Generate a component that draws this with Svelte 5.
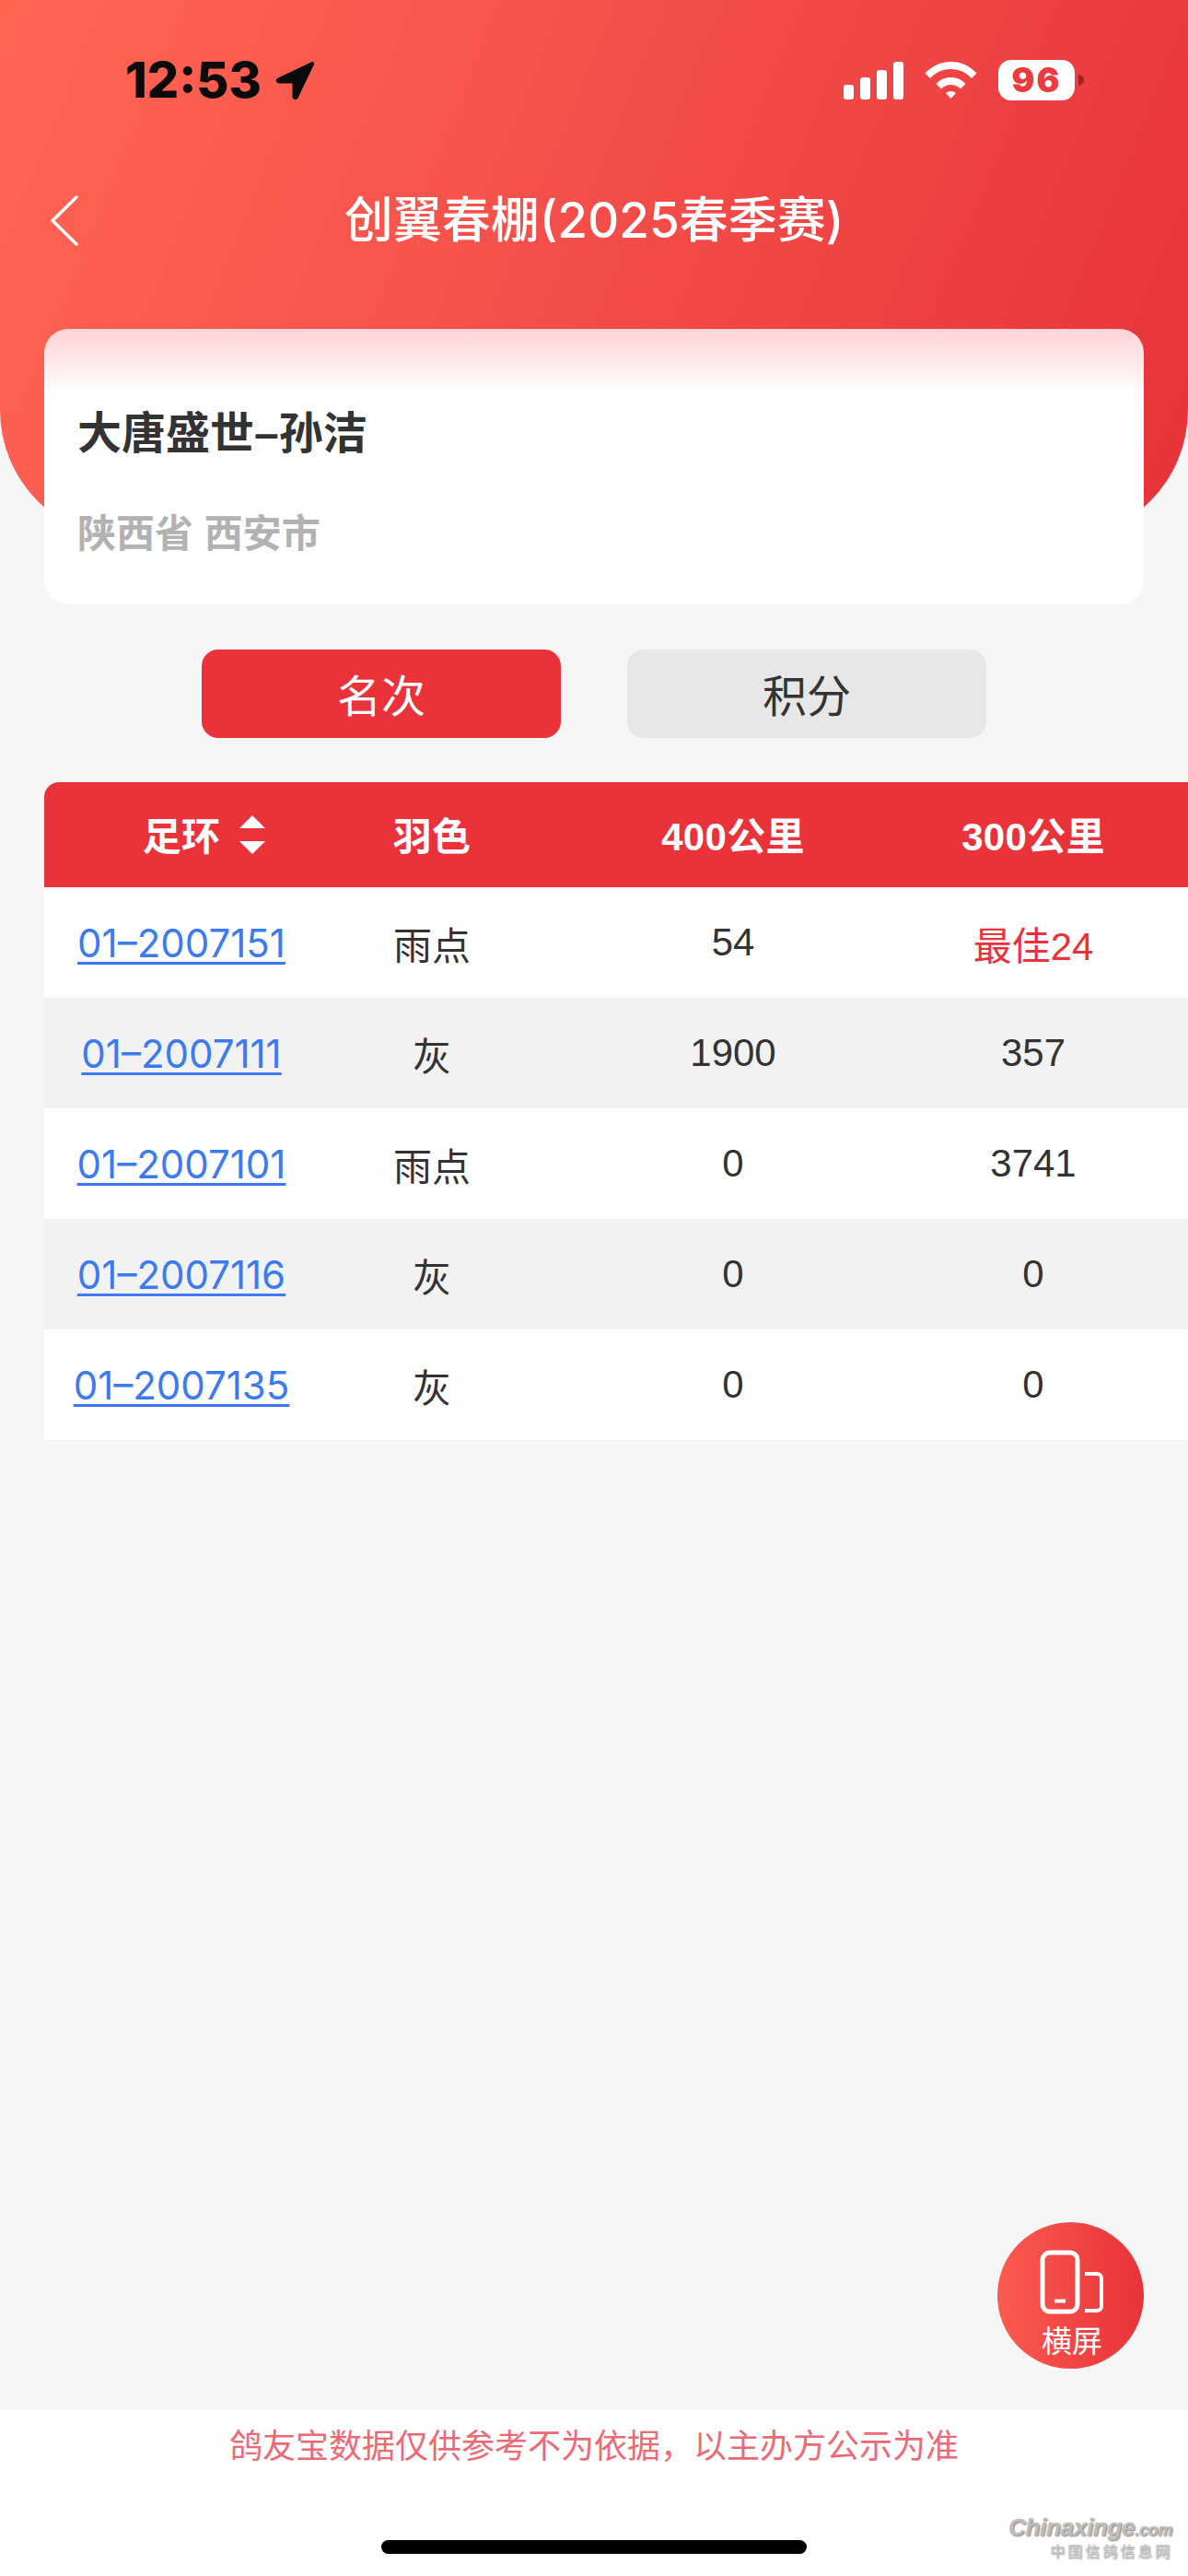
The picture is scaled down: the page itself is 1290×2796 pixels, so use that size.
<script>
	const rows = [
		{ ring: '01–2007151', color: '雨点', a: '54', b: '最佳24', best: true },
		{ ring: '01–2007111', color: '灰', a: '1900', b: '357' },
		{ ring: '01–2007101', color: '雨点', a: '0', b: '3741' },
		{ ring: '01–2007116', color: '灰', a: '0', b: '0' },
		{ ring: '01–2007135', color: '灰', a: '0', b: '0' }
	];
</script>

<div class="page">
	<header class="top">
		<div class="status">
			<div class="time">
				<span>12:53</span>
				<svg width="46" height="46" viewBox="0 0 46 46">
					<path d="M41 3.500 5 20.500c-3.400 1.600-2.400 6 1.300 6H20.500V40.700c0 3.800 4.500 4.700 6.200 1.300L43.800 6.300C45 3.900 43.300 2.400 41 3.500z" fill="#0a0a0a" />
				</svg>
			</div>
			<div class="sys">
				<div class="bars">
					<i style="height:16px"></i>
					<i style="height:24px"></i>
					<i style="height:32px"></i>
					<i style="height:41px"></i>
				</div>
				<svg class="wifi" width="59" height="42" viewBox="0 0 58 42">
					<path d="M1 13.500C8.500 5.500 18 1 29 1s20.500 4.500 28 12.500l-5.500 5.500C45.500 12.500 38 9 29 9S12.500 12.500 6.500 19z" fill="#fff" />
					<path d="M13 25C17 20.500 22.800 18 29 18s12 2.500 16 7l-5.500 5.500C36.700 27.500 33 26 29 26s-7.700 1.500-10.500 4.500z" fill="#fff" />
					<path d="M23.500 35c1.500-1.300 3.500-2 5.500-2s4 .7 5.500 2L29 41z" fill="#fff" />
				</svg>
				<div class="battery"><b>96</b><i></i></div>
			</div>
		</div>
		<div class="nav">
			<svg class="back" width="34" height="55" viewBox="0 0 34 55">
				<path d="M30 2 4 27.500 30 53" fill="none" stroke="#fff" stroke-width="3.500" stroke-linecap="round" stroke-linejoin="round" />
			</svg>
			<h1>创翼春棚(2025春季赛)</h1>
		</div>
	</header>

	<section class="card">
		<div class="name">大唐盛世–孙洁</div>
		<div class="place">陕西省 西安市</div>
	</section>

	<div class="tabs">
		<button class="tab on">名次</button>
		<button class="tab">积分</button>
	</div>

	<div class="table">
		<div class="row head">
			<div class="sort">
				足环
				<svg width="30" height="42" viewBox="0 0 30 42">
					<path d="M15 0 29 14H1zM1 28h28L15 42z" fill="#fff" />
				</svg>
			</div>
			<div>羽色</div>
			<div>400公里</div>
			<div>300公里</div>
		</div>
		{#each rows as r}
			<div class="row">
				<div><a href="#top">{r.ring}</a></div>
				<div>{r.color}</div>
				<div>{r.a}</div>
				<div class:best={r.best}>{r.b}</div>
			</div>
		{/each}
	</div>

	<div class="spacer">
		<div class="fab">
			<svg width="72" height="70" viewBox="0 0 72 70">
				<rect x="3" y="3" width="38" height="64" rx="8" fill="none" stroke="#fff" stroke-width="5" />
				<path d="M16 55.500h12" stroke="#fff" stroke-width="4" />
				<path d="M49 26h13c3 0 5 2 5 5v30c0 3-2 5-5 5H49" fill="none" stroke="#fff" stroke-width="4" />
			</svg>
			<span>横屏</span>
		</div>
	</div>

	<footer class="foot">
		<p>鸽友宝数据仅供参考不为依据，以主办方公示为准</p>
		<div class="home"></div>
		<div class="mark">
			<div class="en">Chinaxinge<small>.com</small></div>
			<div class="cn">中国信鸽信息网</div>
		</div>
	</footer>
</div>

<style>
	:global(body) {
		margin: 0;
		background: #f6f6f6;
	}
	.page {
		width: 1290px;
		height: 2796px;
		display: flex;
		flex-direction: column;
		overflow: hidden;
		font-family: "Liberation Sans", "Noto Sans CJK SC", sans-serif;
		color: #333;
	}
	.top {
		height: 585px;
		box-sizing: border-box;
		padding-top: 64px;
		border-radius: 0 0 140px 140px;
		background: linear-gradient(112deg, #ff6652 0%, #f4504b 45%, #e8323a 100%);
	}
	.status {
		height: 46px;
		display: flex;
		justify-content: space-between;
		align-items: center;
		padding: 0 123px 0 136px;
	}
	.time {
		display: flex;
		align-items: center;
		gap: 13px;
		font: 800 54px/46px Inter, sans-serif;
		color: #0a0a0a;
	}
	.sys {
		display: flex;
		align-items: center;
		gap: 22px;
	}
	.bars {
		display: flex;
		align-items: flex-end;
		gap: 7px;
		height: 41px;
	}
	.bars i {
		width: 11px;
		background: #fff;
		border-radius: 3px;
	}
	.battery {
		position: relative;
		width: 83px;
		height: 44px;
		background: #fff;
		border-radius: 14px;
		display: flex;
		align-items: center;
		justify-content: center;
	}
	.battery b {
		font: 900 37px/44px Inter, sans-serif;
		letter-spacing: 2px;
		color: #ea3c40;
	}
	.battery i {
		position: absolute;
		left: 87px;
		top: 16px;
		width: 6px;
		height: 12px;
		border-radius: 0 6px 6px 0;
		background: rgba(90, 10, 15, 0.5);
	}
	.nav {
		position: relative;
		margin-top: 99px;
		height: 60px;
		display: flex;
		align-items: center;
		justify-content: center;
	}
	.back {
		position: absolute;
		left: 53px;
		top: 3px;
	}
	h1 {
		margin: 0;
		font-family: Inter, "Noto Sans CJK SC", sans-serif;
		font-size: 53px;
		line-height: 60px;
		font-weight: 500;
		color: #fff;
	}
	.card {
		margin: -228px 48px 0;
		height: 299px;
		box-sizing: border-box;
		padding: 83px 36px 0;
		position: relative;
		border-radius: 26px;
		background: linear-gradient(180deg, #fdd3d5 0, #fff 72px);
	}
	.name {
		font-size: 48px;
		line-height: 62px;
		font-weight: 700;
	}
	.place {
		margin-top: 51px;
		font-size: 42px;
		line-height: 54px;
		font-weight: 700;
		color: #b2b2b2;
	}
	.tabs {
		margin-top: 49px;
		display: flex;
		justify-content: center;
		gap: 72px;
	}
	.tab {
		width: 390px;
		height: 96px;
		padding: 0 0 3px;
		border: 0;
		border-radius: 18px;
		font: inherit;
		font-size: 48px;
		background: #e7e7e7;
		color: #333;
	}
	.tab.on {
		background: #e9323a;
		color: #fff;
	}
	.table {
		margin: 48px 0 0 48px;
	}
	.row {
		height: 120px;
		display: grid;
		grid-template-columns: 298px 246px 408px 244px;
		align-items: center;
		text-align: center;
		font-size: 42px;
		background: #fff;
	}
	.row:nth-child(odd) {
		background: #f2f2f2;
	}
	.row.head {
		height: 114px;
		box-sizing: border-box;
		padding-bottom: 3px;
		border-radius: 16px 0 0 0;
		background: #e9323a;
		color: #fff;
		font-weight: 700;
		letter-spacing: 0.3px;
	}
	.sort {
		position: relative;
	}
	.sort svg {
		position: absolute;
		left: 211px;
		top: 50%;
		margin-top: -20px;
	}
	a {
		font-family: Inter, sans-serif;
		font-size: 42px;
		color: #3c7bee;
		text-decoration-thickness: 3px;
		text-underline-offset: 5px;
	}
	.best {
		color: #e9323a;
	}
	.spacer {
		flex: 1;
		position: relative;
	}
	.fab {
		position: absolute;
		right: 48px;
		bottom: 45px;
		width: 159px;
		height: 159px;
		border-radius: 50%;
		background: linear-gradient(90deg, #fb5b50, #e8323a);
		color: #fff;
		display: flex;
		flex-direction: column;
		align-items: center;
		padding-top: 30px;
		box-sizing: border-box;
	}
	.fab svg {
		margin-left: 4px;
	}
	.fab span {
		font-size: 33px;
		line-height: 40px;
		margin: 10px 0 0 3px;
	}
	.foot {
		height: 180px;
		position: relative;
		background: #fff;
		text-align: center;
	}
	.foot p {
		margin: 0;
		padding-top: 17px;
		font-size: 36px;
		line-height: 46px;
		color: #ec6a76;
	}
	.home {
		position: absolute;
		left: 414px;
		top: 141px;
		width: 462px;
		height: 15px;
		border-radius: 8px;
		background: #000;
	}
	.mark {
		position: absolute;
		right: 17px;
		bottom: 16px;
		text-align: right;
		color: #bdbdbd;
		text-shadow: 1px 1px 2px #777;
	}
	.mark .en {
		font: italic 700 26px/28px "Liberation Sans", sans-serif;
		letter-spacing: -0.3px;
	}
	.mark small {
		font-size: 18px;
	}
	.mark .cn {
		font-size: 16px;
		line-height: 20px;
		letter-spacing: 3px;
		color: #d0d0d0;
	}
</style>
